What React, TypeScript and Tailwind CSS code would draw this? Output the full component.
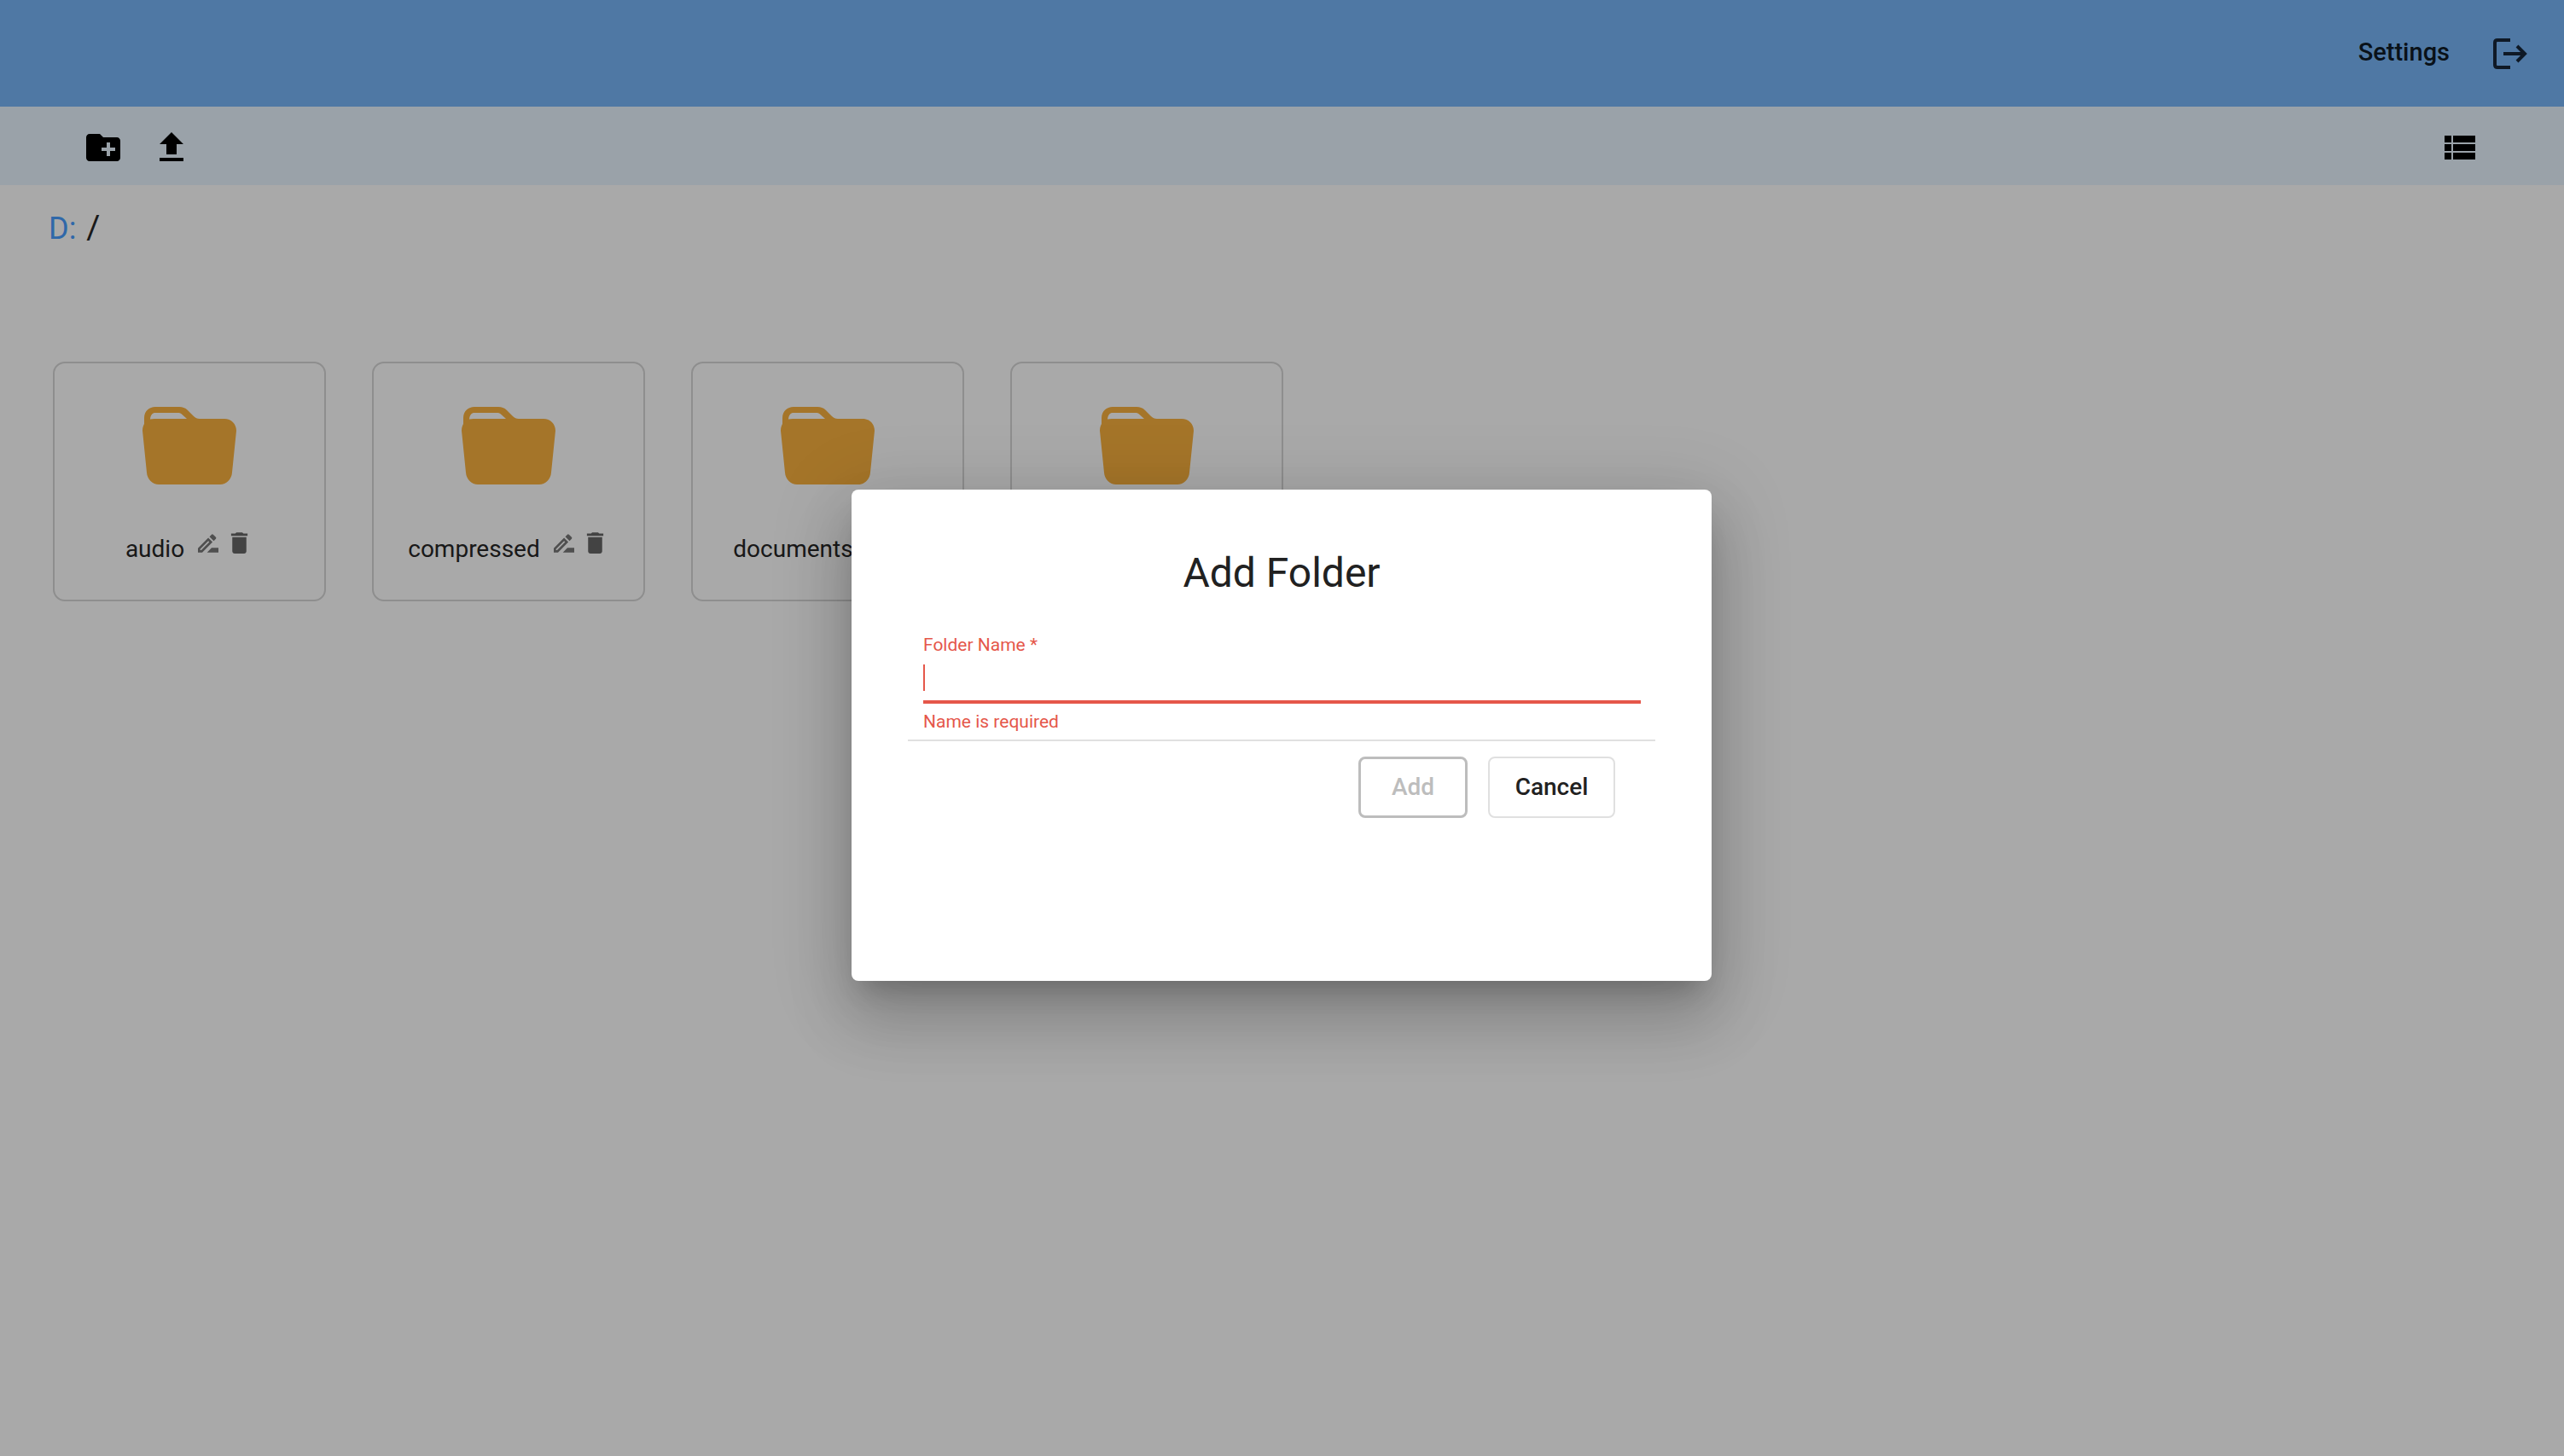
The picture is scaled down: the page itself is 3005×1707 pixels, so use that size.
import { MdCreateNewFolder, MdFileUpload, MdViewList, MdDelete, MdOutlineDriveFileRenameOutline } from 'react-icons/md';

const folders = ['audio', 'compressed', 'documents', 'images'];

function FolderIcon() {
  return (
    <svg width="110" height="91" viewBox="0 0 110 91" className="shrink-0">
      <path
        fill="#f9b13f"
        fillRule="evenodd"
        d="M2 20V13C2 5 8 0 15 0H43C47 0 50 1 53 4L60 11C62 13 64 14 67 14H96C104 14 110 20 110 28L105 77C104.5 85 98 91 91 91H19C12 91 5.5 85 5 77L0 28C0 24 1 22 2 20ZM9 14.5C9.5 9.5 11.5 7 15 7H41C44 7 45 7.5 47 9.5L52 14H14C12 14 10.5 14.2 9 14.5Z"
      />
    </svg>
  );
}

function LogoutIcon() {
  return (
    <svg width="40" height="36" viewBox="0 0 40 36" fill="none" stroke="#17273a" strokeWidth="4">
      <path d="M20 2H5C3 2 2 3 2 5V31C2 33 3 34 5 34H20" />
      <path d="M12 18H37M28 9L37 18L28 27" />
    </svg>
  );
}

function FolderCard({ name }: { name: string }) {
  return (
    <div className="w-[320px] h-[281px] shrink-0 border-2 border-[#d6d6d6] rounded-[14px] flex flex-col items-center pt-[51px]">
      <FolderIcon />
      <div className="flex items-start mt-[58px] gap-[12px]">
        <span className="text-[28px] leading-[36px] text-[#262626]">{name}</span>
        <div className="flex items-center gap-[4px] -mt-[6px]">
          <MdOutlineDriveFileRenameOutline className="w-[32px] h-[32px] text-[#777777]" />
          <MdDelete className="w-[33px] h-[33px] text-[#666666]" />
        </div>
      </div>
    </div>
  );
}

function AddFolderDialog() {
  return (
    <div className="absolute inset-0 bg-black/[0.337] flex items-center justify-center">
      <div className="w-[1008px] h-[576px] mt-[17px] mr-[1px] bg-white rounded-[8px] px-[66px] pt-[68px] shadow-[0_21px_29px_-13px_rgba(0,0,0,0.2),0_46px_73px_6px_rgba(0,0,0,0.14),0_17px_88px_15px_rgba(0,0,0,0.12)]">
        <h2 className="text-center text-[48px] leading-[60px] text-[#212121]">Add Folder</h2>
        <div className="pl-[18px] pr-[17px] mt-[40px]">
          <div className="text-[21px] leading-[28px] text-[#e5574a]">Folder Name *</div>
          <div className="h-[42px] pt-[9px] border-b-4 border-[#e5574a] box-content">
            <div className="w-[2px] h-[31px] bg-[#e5574a]" />
          </div>
          <div className="text-[21px] leading-[28px] mt-[7px] text-[#e5574a]">Name is required</div>
        </div>
        <div className="border-t-2 border-[#e0e0e0] mt-[7px] flex justify-end gap-[24px] pt-[18px] pr-[47px]">
          <button className="w-[128px] h-[72px] border-[3px] border-[#bdbdbd] rounded-[8px] text-[28px] font-medium text-[#bdbdbd]">Add</button>
          <button className="w-[149px] h-[72px] border-2 border-[#e0e0e0] rounded-[8px] text-[28px] font-medium text-[#212121]">Cancel</button>
        </div>
      </div>
    </div>
  );
}

export default function App() {
  return (
    <div className="relative h-screen w-full overflow-hidden bg-white font-[Roboto,sans-serif]">
      <header className="h-[125px] bg-[#77b6f8] flex items-center justify-end pr-[43px] gap-[51px]">
        <span className="text-[29px] font-medium text-[#0f1a27] -mt-[2px]">Settings</span>
        <LogoutIcon />
      </header>
      <div className="h-[92px] bg-[#e8f4ff] flex items-center justify-between pl-[97px] pr-[98px] pt-1 text-black">
        <div className="flex items-center gap-[32px]">
          <MdCreateNewFolder className="w-[48px] h-[48px] text-[#000000]" />
          <MdFileUpload className="w-[48px] h-[48px]" />
        </div>
        <MdViewList className="w-[48px] h-[48px]" />
      </div>
      <div className="pl-[57px] pt-[29px] text-[36px] leading-[42px]">
        <span className="text-[#489dff]">D:</span>
        <span className="text-[#262626] ml-[12px] text-[39px]">/</span>
      </div>
      <div className="flex gap-[54px] ml-[62px] mt-[135px]">
        {folders.map((name) => (
          <FolderCard key={name} name={name} />
        ))}
      </div>
      <AddFolderDialog />
    </div>
  );
}
